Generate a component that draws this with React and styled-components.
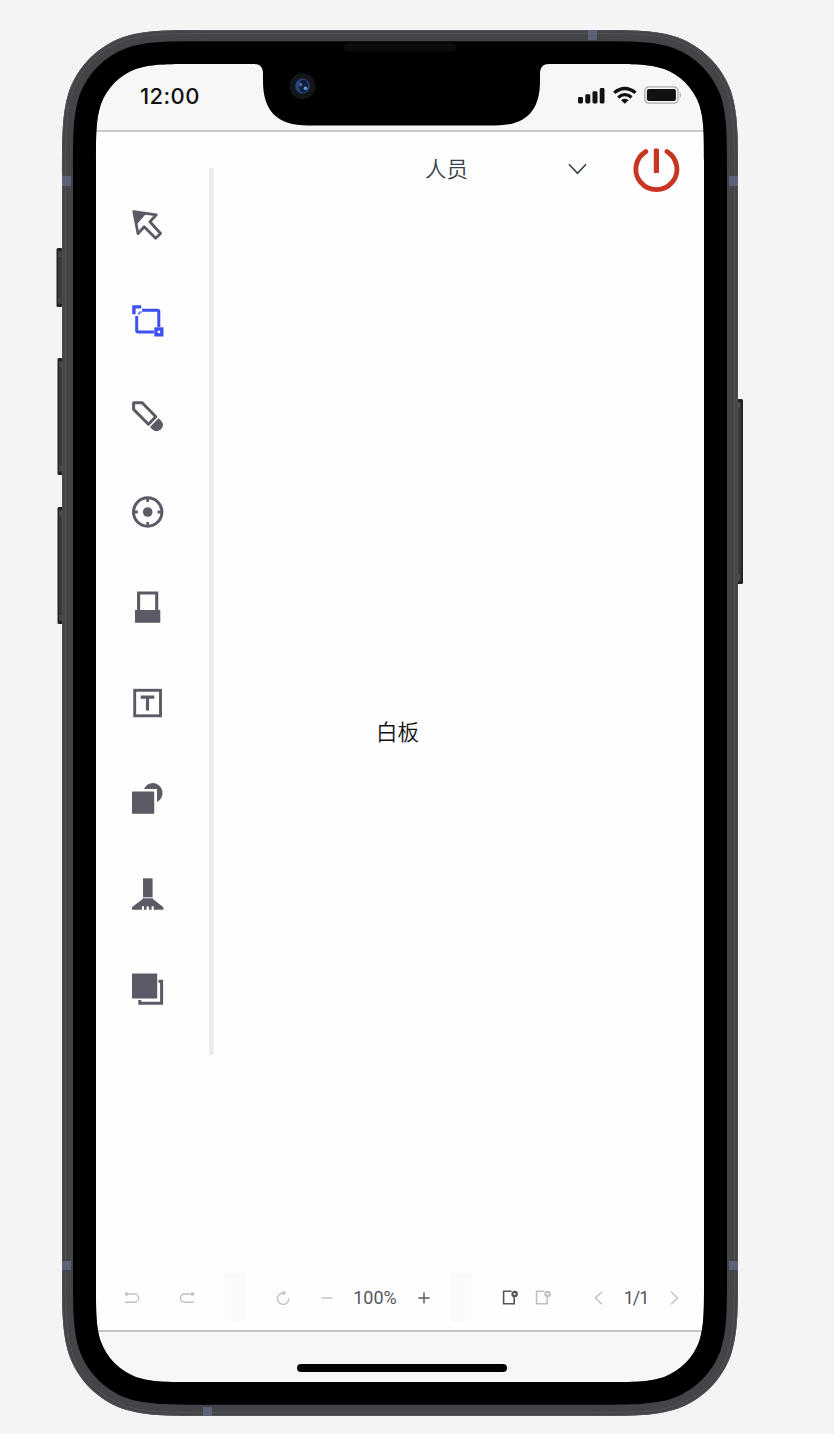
import React from 'react';
import styled, { createGlobalStyle } from 'styled-components';

const GlobalStyle = createGlobalStyle`
  * { box-sizing: border-box; }
  body { margin: 0; background: #f4f4f4; }
  svg { display: block; flex: none; }
`;

const sans = `Inter, "Noto Sans CJK SC", sans-serif`;

const Page = styled.main`
  width: 834px;
  height: 1434px;
  padding: 30px 0 0 62px;
  overflow: hidden;
  background: #f4f4f4;
  font-family: ${sans};
`;

const Device = styled.div`
  position: relative;
  width: 676px;
  height: 1386px;
  padding: 34px;
`;

const Shell = styled.svg`
  position: absolute;
  left: -10px;
  top: 0;
  pointer-events: none;
`;

const Screen = styled.div`
  display: flex;
  flex-direction: column;
  width: 608px;
  height: 1318px;
  background: #fefefe;
`;

const StatusBar = styled.header`
  display: flex;
  justify-content: space-between;
  align-items: flex-start;
  height: 68px;
  padding: 19px 22px 0 44px;
  background: #f7f7f7;
  border-bottom: 2px solid #c9c9c9;
`;

const Clock = styled.time`
  font-size: 22px;
  line-height: 27px;
  font-weight: 550;
  letter-spacing: 0.4px;
  color: #111;
`;

const StatusIcons = styled.div`
  display: flex;
  gap: 7.5px;
  padding-top: 3px;
`;

const Workspace = styled.div`
  display: flex;
  height: 1133px;
`;

const ToolRail = styled.nav`
  display: flex;
  width: 118px;
  height: 887px;
  margin-top: 36px;
`;

const ToolList = styled.div`
  display: flex;
  flex-direction: column;
  gap: 63.56px;
  width: 113px;
  padding: 41px 0 0 36px;
`;

const RailEdge = styled.div`
  width: 5px;
  background: linear-gradient(90deg, #f4f4f4, #e8e8e8 40%, #f4f4f4);
`;

const Tool = styled.button`
  width: 32px;
  height: 32px;
  padding: 0;
  border: 0;
  background: none;
  color: ${(p) => (p.$active ? '#3d50f0' : '#5b5b66')};
`;

const Stage = styled.section`
  flex: 1;
  display: flex;
  flex-direction: column;
`;

const TopBar = styled.div`
  display: flex;
  align-items: center;
  height: 75px;
  padding: 0 24px 0 211px;
`;

const People = styled.div`
  display: flex;
  align-items: center;
  justify-content: space-between;
  width: 161.5px;
  margin-right: 46.5px;
  padding-bottom: 1px;
  color: #36424b;
  font-size: 21.5px;
  font-weight: 350;
  line-height: 32px;
`;

const Board = styled.div`
  height: 1048px;
  display: flex;
  align-items: center;
  justify-content: center;
  padding: 2px 123px 0 0;
  font-size: 21.5px;
  font-weight: 350;
  line-height: 32px;
  color: #111;
`;

const Footer = styled.footer`
  display: flex;
  align-items: center;
  height: 65px;
`;

const FooterGroup = styled.div`
  display: flex;
  align-items: center;
  width: ${(p) => p.$width}px;
  padding-left: ${(p) => p.$inset}px;
`;

const FooterGap = styled.div`
  width: 21px;
  height: 49px;
  background: linear-gradient(90deg, #fbfbfb, #fafafa 50%, #fbfbfb);
`;

const Cell = styled.div`
  display: flex;
  flex: none;
  align-items: center;
  justify-content: center;
  width: ${(p) => p.$width}px;
  margin-left: ${(p) => p.$before || 0}px;
  color: ${(p) => (p.$strong ? '#55555f' : '#bfbfcc')};
  font-family: Roboto, sans-serif;
  font-size: 18px;
  line-height: 24px;
  letter-spacing: ${(p) => p.$tracking || 0}px;
  white-space: nowrap;
`;

const HomeArea = styled.div`
  display: flex;
  justify-content: center;
  flex: 1;
  padding: 32px 0 0 3px;
  border-top: 2px solid #c4c4c4;
  background: #f7f7f7;
`;

const HomeBar = styled.div`
  width: 210px;
  height: 8px;
  border-radius: 4px;
  background: #000;
`;

// Continuous-curvature rounded rectangle.
function squircle(x, y, w, h, r) {
  const R = x + w;
  const B = y + h;
  const a = 1.52866 * r, b = 1.08849 * r, c = 0.86841 * r, d = 0.63149 * r;
  const e = 0.07491 * r, f = 0.37282 * r, g = 0.16906 * r;
  return `M${x + a} ${y}H${R - a}C${R - b} ${y} ${R - c} ${y} ${R - d} ${y + e}` +
    `C${R - f} ${y + g} ${R - g} ${y + f} ${R - e} ${y + d}C${R} ${y + c} ${R} ${y + b} ${R} ${y + a}` +
    `V${B - a}C${R} ${B - b} ${R} ${B - c} ${R - e} ${B - d}C${R - g} ${B - f} ${R - f} ${B - g} ${R - d} ${B - e}` +
    `C${R - c} ${B} ${R - b} ${B} ${R - a} ${B}H${x + a}C${x + b} ${B} ${x + c} ${B} ${x + d} ${B - e}` +
    `C${x + f} ${B - g} ${x + g} ${B - f} ${x + e} ${B - d}C${x} ${B - c} ${x} ${B - b} ${x} ${B - a}` +
    `V${y + a}C${x} ${y + b} ${x} ${y + c} ${x + e} ${y + d}C${x + g} ${y + f} ${x + f} ${y + g} ${x + d} ${y + e}` +
    `C${x + c} ${y} ${x + b} ${y} ${x + a} ${y}Z`;
}

const outer = squircle(0, 0, 676, 1386, 96);
const lip = squircle(3.5, 3.5, 669, 1379, 93);
const bezel = squircle(11, 11.3, 654, 1363.4, 86);
const glass = squircle(34, 34, 608, 1318, 64);
const notch =
  'M192 33V34C198 34 201 37 201 44V51C201 81 215 95.5 246 95.5H433C464 95.5 478 81 478 51V44C478 37 481 34 487 34V33Z';

function SideKey({ x, y, h, right }) {
  return (
    <g>
      <rect x={x} y={y} width="6" height={h} rx="1.5" fill="#23242a" />
      <rect x={right ? x : x + 1.5} y={y + 3} width="4" height={h - 6} fill="#383a40" />
      <rect x={right ? x + 1 : x + 2} y={y + 4} width="2" height="5" fill="#4a4c51" />
      <rect x={right ? x + 1 : x + 2} y={y + h - 9} width="2" height="5" fill="#4a4c51" />
    </g>
  );
}

function DeviceShell() {
  return (
    <Shell width="696" height="1386" viewBox="-10 0 696 1386">
      <SideKey x={-5.5} y={218} h={59} />
      <SideKey x={-4.5} y={328} h={117} />
      <SideKey x={-4.5} y={477} h={117} />
      <SideKey x={675} y={369} h={185} right />
      <path d={outer + glass} fill="#434448" fillRule="evenodd" />
      <path d={squircle(0.5, 0.5, 675, 1385, 95.6)} fill="none" stroke="#505154" />
      <path d={lip} fill="none" stroke="#505255" />
      <path d={bezel + glass} fill="#000" fillRule="evenodd" />
      <path
        d="M526 0h9v10h-9zM141 1377h9v9h-9zM0 146h9v10h-9zM667 146h9v10h-9zM0 1231h9v9h-9zM667 1231h9v9h-9z"
        fill="#5d6178"
      />
      <path d={notch} fill="#000" />
      <rect x="282" y="12.5" width="112" height="9" rx="4" fill="#0b0b0c" />
      <circle cx="240.5" cy="56" r="13" fill="#141518" />
      <circle cx="240.5" cy="56" r="7.4" fill="#24457a" />
      <ellipse cx="241.5" cy="56" rx="4.6" ry="6.4" fill="#10203f" />
      <circle cx="238.5" cy="54.5" r="1.7" fill="#655fa0" />
      <circle cx="243.5" cy="58.3" r="1.8" fill="#6b9ac8" />
    </Shell>
  );
}

const toolGlyphs = {
  select: (
    <>
      <path d="M1.8 2.7 24.3 5.8 17.9 12.7 28.6 24.5 23.6 29.2 12.2 17.8 6 24.6Z" fill="none" stroke="currentColor" strokeWidth="2.8" strokeLinejoin="round" />
      <path d="M.8 1.7 14.5 4.2 4.5 15.7Z" fill="currentColor" />
    </>
  ),
  area: (
    <>
      <path d="M10 5.2H25.6q1.2 0 1.2 1.2V21.9M4.7 11V25.5q0 1.4 1.4 1.4H22" fill="none" stroke="currentColor" strokeWidth="3" />
      <path d="M1.9 9.2V1.9H9.2" fill="none" stroke="currentColor" strokeWidth="3.4" />
      <path d="M6.8 9.8Q6.8 7 9.6 7" fill="none" stroke="currentColor" strokeWidth="2" opacity=".7" />
      <rect x="24" y="24" width="5.8" height="5.8" fill="#fff" stroke="currentColor" strokeWidth="3.4" />
    </>
  ),
  pen: (
    <>
      <path d="M1.6 2.7H10.2L23.8 16.7 16.4 24.2 1.6 9.4Z" fill="none" stroke="currentColor" strokeWidth="3" strokeLinejoin="round" />
      <path d="M26.5 18.3 18 27 20.5 29.6Q24.5 33 28.9 29.2 33 25 29.4 21Z" fill="currentColor" />
    </>
  ),
  laser: (
    <>
      <circle cx="15.7" cy="16" r="14.2" fill="none" stroke="currentColor" strokeWidth="3" />
      <circle cx="15.7" cy="16" r="4.8" fill="currentColor" />
      <path d="M15.7 2V6M15.7 26V30M2 16H5.8M25.6 16H29.5" stroke="currentColor" strokeWidth="2.8" />
    </>
  ),
  eraser: (
    <>
      <path d="M6.6 20V2H24.7V20" fill="none" stroke="currentColor" strokeWidth="3.1" />
      <rect x="3" y="19" width="25.3" height="12.8" rx=".6" fill="currentColor" />
    </>
  ),
  text: (
    <>
      <rect x="2.7" y="3.3" width="25.8" height="25.5" fill="none" stroke="currentColor" strokeWidth="2.9" />
      <path d="M8.7 10.1H22.3M15.5 10V23.4" stroke="currentColor" strokeWidth="3.2" fill="none" />
    </>
  ),
  shapes: (
    <>
      <path d="M12 7Q14.5 .9 21.2 .9A10.1 10.1 0 0 1 25 20V7Z" fill="currentColor" />
      <rect x="0" y="9.5" width="22.2" height="22.2" rx=".6" fill="currentColor" />
    </>
  ),
  clear: (
    <>
      <rect x="11" y=".3" width="9.6" height="19" fill="currentColor" />
      <rect x="10.4" y="20.3" width="10.8" height="2" fill="currentColor" />
      <path d="M10 21.4H21.6L31.4 29.2V31.7H21.7V28.3H19.6V31.7H17V28.6H14.6V31.7H12V28.3H9.9V31.7H0V29.2Z" fill="currentColor" />
    </>
  ),
  layers: (
    <>
      <path d="M7.8 27V30.2H29.6V8.2H26.5" fill="none" stroke="currentColor" strokeWidth="3" />
      <rect x="0" y=".6" width="25.2" height="25" rx=".6" fill="currentColor" />
    </>
  ),
};

const tools = [
  ['select', '选择'],
  ['area', '框选'],
  ['pen', '画笔'],
  ['laser', '激光笔'],
  ['eraser', '橡皮'],
  ['text', '文字'],
  ['shapes', '图形'],
  ['clear', '清空'],
  ['layers', '图层'],
];

const Line = ({ w, h, d, sw = 1.4, children }) => (
  <svg width={w} height={h} viewBox={`0 0 ${w} ${h}`} fill="none" stroke="currentColor" strokeWidth={sw}>
    <path d={d} />
    {children}
  </svg>
);

const PageIcon = () => (
  <Line w={16} h={15} sw={1.6} d="M9.6 1.3H1.6V13.8H12.2V7">
    <circle cx="12.6" cy="4" r="2.2" strokeWidth="2.2" />
  </Line>
);

function StatusGlyphs() {
  return (
    <StatusIcons>
      <svg width="27" height="18" viewBox="0 0 27 18" fill="#111">
        <rect x="0" y="11" width="5" height="6.5" rx="1.4" />
        <rect x="7.3" y="8.3" width="5" height="9.2" rx="1.4" />
        <rect x="14.5" y="5.2" width="5" height="12.3" rx="1.4" />
        <rect x="21.7" y="2" width="4.8" height="15.5" rx="1.4" />
      </svg>
      <svg width="24" height="18" viewBox="0 0 24 18" fill="none" stroke="#111" strokeWidth="3.3">
        <path d="M1.2 6.8Q11.8-1.7 22.5 6.8M5.2 11.4Q11.8 5.9 18.5 11.4" />
        <path d="M8 14.2Q11.8 11.4 15.6 14.2L11.8 17.8Z" fill="#111" stroke="none" />
      </svg>
      <svg width="38" height="18" viewBox="0 0 38 18">
        <rect x=".8" y=".9" width="33.2" height="16.2" rx="4" fill="none" stroke="#aaa" strokeWidth="1.3" />
        <rect x="2.9" y="3.1" width="29" height="11.8" rx="2" fill="#111" />
        <path d="M35.7 5.7Q38.3 8.9 35.7 12.1Z" fill="#aaa" />
      </svg>
    </StatusIcons>
  );
}

export default function App() {
  return (
    <Page>
      <GlobalStyle />
      <Device>
        <Screen>
          <StatusBar>
            <Clock>12:00</Clock>
            <StatusGlyphs />
          </StatusBar>
          <Workspace>
            <ToolRail>
              <ToolList>
                {tools.map(([id, label]) => (
                  <Tool key={id} aria-label={label} $active={id === 'area'}>
                    <svg width="32" height="32" viewBox="0 0 32 32">{toolGlyphs[id]}</svg>
                  </Tool>
                ))}
              </ToolList>
              <RailEdge />
            </ToolRail>
            <Stage>
              <TopBar>
                <People>
                  <span>人员</span>
                  <Line w={19} h={12} sw={1.6} d="M1 1.3 9.5 10.3 18 1.3" />
                </People>
                <svg width="47" height="46" viewBox="0 0 47 46" fill="none" stroke="#c83520" strokeWidth="4.8" strokeLinecap="round">
                  <path d="M12.8 4.6A20.5 20.5 0 1 0 34 4.6" />
                  <rect x="20.8" y="1.6" width="5.2" height="24.5" rx="1.2" fill="#c83520" stroke="none" />
                </svg>
              </TopBar>
              <Board>白板</Board>
            </Stage>
          </Workspace>
          <Footer>
            <FooterGroup $width={128} $inset={9}>
              <Cell $width={54.5}>
                <Line w={16} h={12} d="M1 2H10.5a4.1 4.1 0 0 1 0 8.2H1M3.5 .2 1.2 2 3.5 3.8" />
              </Cell>
              <Cell $width={54.5}>
                <Line w={16} h={12} d="M15 2H5.5a4.1 4.1 0 0 0 0 8.2H15M12.5 .2 14.8 2 12.5 3.8" />
              </Cell>
            </FooterGroup>
            <FooterGap />
            <FooterGroup $width={206} $inset={15.5}>
              <Cell $width={44}>
                <Line w={14} h={14} d="M8.8 2H7A5.7 5.7 0 1 0 12.8 7.6M7 .2 9 2 7 3.8" />
              </Cell>
              <Cell $width={44}>
                <Line w={12} h={12} d="M.5 6H11.5" />
              </Cell>
              <Cell $width={53} $strong>100%</Cell>
              <Cell $width={45} $strong>
                <Line w={12} h={12} sw={1.4} d="M.5 6H11.5M6 .5V11.5" />
              </Cell>
            </FooterGroup>
            <FooterGap />
            <FooterGroup $width={232} $inset={21}>
              <Cell $width={33.5} $strong><PageIcon /></Cell>
              <Cell $width={33.5}><PageIcon /></Cell>
              <Cell $width={38} $before={19}>
                <Line w={9} h={14} d="M8 .7 1.4 7 8 13.3" />
              </Cell>
              <Cell $width={38} $strong $tracking={-1}>1/1</Cell>
              <Cell $width={38}>
                <Line w={9} h={14} d="M1 .7 7.6 7 1 13.3" />
              </Cell>
            </FooterGroup>
          </Footer>
          <HomeArea>
            <HomeBar />
          </HomeArea>
        </Screen>
        <DeviceShell />
      </Device>
    </Page>
  );
}
